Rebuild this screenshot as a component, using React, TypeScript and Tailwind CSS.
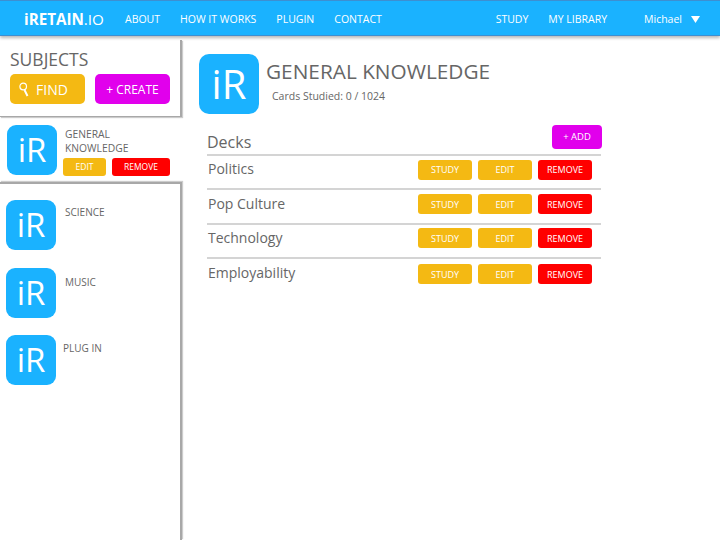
import React from 'react';

const font = "font-['Open_Sans',sans-serif]";

function Logo({ size = 'sm' }: { size?: 'sm' | 'lg' }) {
  return (
    <div
      className={
        size === 'lg'
          ? 'flex h-[60px] w-[60px] shrink-0 items-center justify-center rounded-[10px] bg-[#1ab2ff] text-[40px] text-white'
          : 'flex h-[50px] w-[50px] shrink-0 items-center justify-center rounded-[9px] bg-[#1ab2ff] text-[33px] text-white'
      }
    >
      iR
    </div>
  );
}

function Btn({ label, color }: { label: string; color: 'yellow' | 'red' }) {
  return (
    <div
      className={`flex h-5 w-[54px] items-center justify-center rounded-[3px] pt-px text-[9px] text-white ${
        color === 'red' ? 'bg-[#ff0000]' : 'bg-[#f4b913]'
      }`}
    >
      {label}
    </div>
  );
}

const decks = ['Politics', 'Pop Culture', 'Technology', 'Employability'];

export default function App() {
  return (
    <div className={`flex h-[540px] w-[720px] flex-col overflow-hidden bg-white ${font} text-[#666666]`}>
      {/* top nav */}
      <div className="z-10 flex h-[36px] shrink-0 items-center border-y border-[#3d8fd1] bg-[#1ab2ff] pl-6 pt-[3px] text-[10.5px] text-white shadow-[0_2px_3px_rgba(0,0,0,0.28)]">
        <div className="w-[101px] text-[15.2px]">
          <span className="font-bold">iRETAIN</span>.IO
        </div>
        <div className="flex gap-[20px]">
          <span>ABOUT</span>
          <span>HOW IT WORKS</span>
          <span>PLUGIN</span>
          <span>CONTACT</span>
        </div>
        <div className="ml-auto flex items-center">
          <span>STUDY</span>
          <span className="ml-[20px]">MY LIBRARY</span>
          <span className="ml-[37px]">Michael</span>
          <svg className="ml-[9px] mr-[20px]" width="9" height="7" viewBox="0 0 9 7">
            <path d="M0 0h9L4.5 7z" fill="#fff" />
          </svg>
        </div>
      </div>

      <div className="flex min-h-0 flex-1">
        {/* sidebar */}
        <div className="flex w-[182px] shrink-0 flex-col">
          <div className="mt-[4px] h-[77px] shrink-0 border-r-[2px] border-b border-[#a8a8a8] pl-[10px] pt-[9px] shadow-[1px_1px_1px_rgba(0,0,0,0.2)]">
            <div className="text-[17.5px] leading-[20px]">SUBJECTS</div>
            <div className="mt-[5px] flex gap-[10px]">
              <div className="flex h-[30px] w-[75px] items-center rounded-[5px] bg-[#f4b913] pl-[9px] pt-px text-[14px] text-white">
                <svg width="10" height="16" viewBox="0 0 10 16" fill="none" stroke="#fff" strokeWidth="1.2">
                  <circle cx="4.2" cy="4.5" r="3.3" />
                  <path d="M5.5 8l3 6" strokeWidth="2" />
                </svg>
                <span className="ml-[7px]">FIND</span>
              </div>
              <div className="flex h-[30px] w-[75px] items-center justify-center rounded-[5px] bg-[#e100ec] pt-[2px] text-[12px] text-white">
                + CREATE
              </div>
            </div>
          </div>

          {/* selected subject */}
          <div className="flex h-[65px] shrink-0 pl-[7px] pt-[8px]">
            <Logo />
            <div className="ml-[6px] pt-[2px]">
              <div className="ml-[2px] text-[10.3px] leading-[14px]">
                GENERAL
                <br />
                KNOWLEDGE
              </div>
              <div className="mt-[3px] flex gap-[6px]">
                <div className="flex h-[18px] w-[43px] items-center justify-center rounded-[3px] bg-[#f4b913] text-[8.5px] text-white">EDIT</div>
                <div className="flex h-[18px] w-[58px] items-center justify-center rounded-[3px] bg-[#ff0000] text-[8.5px] text-white">REMOVE</div>
              </div>
            </div>
          </div>

          <div className="flex flex-1 flex-col gap-[17.5px] border-t-[2px] border-r-[2px] border-[#a8a8a8] pl-[6px] pt-[16px] shadow-[1px_-1px_1px_rgba(0,0,0,0.2)]">
            <div className="flex">
              <Logo />
              <div className="ml-[9px] mt-[5px] text-[10px] leading-[14px]">SCIENCE</div>
            </div>
            <div className="flex">
              <Logo />
              <div className="ml-[9px] mt-[7px] text-[10px] leading-[14px]">MUSIC</div>
            </div>
            <div className="flex">
              <Logo />
              <div className="ml-[7px] mt-[6px] text-[10px] leading-[14px]">PLUG IN</div>
            </div>
          </div>
        </div>

        {/* main */}
        <div className="flex-1 pl-[17px] pt-[18px]">
          <div className="flex">
            <Logo size="lg" />
            <div className="ml-[7px] pt-[3px]">
              <div className="text-[20.8px] leading-[28px]">GENERAL KNOWLEDGE</div>
              <div className="ml-[6px] mt-[4px] text-[10.5px] leading-[14px]">Cards Studied: 0 / 1024</div>
            </div>
          </div>

          <div className="ml-[8px] mt-[11px] w-[394px]">
            <div className="flex h-[31px] items-end justify-between border-b-[2px] border-[#d4d4d4]">
              <span className="mb-px text-[16px] leading-[22px]">Decks</span>
              <div className="mb-[5px] mr-[-1px] flex h-[24px] w-[50px] items-center justify-center rounded-[4px] bg-[#e100ec] text-[9.5px] text-white">
                + ADD
              </div>
            </div>
            {decks.map((deck) => (
              <div key={deck} className="flex h-[34.4px] items-center justify-between border-b-[2px] border-[#d4d4d4] pl-px pr-[9px] last:border-b-0">
                <span className="mb-[6px] text-[14px] leading-[20px]">{deck}</span>
                <div className="mb-[5px] flex gap-[6px]">
                  <Btn label="STUDY" color="yellow" />
                  <Btn label="EDIT" color="yellow" />
                  <Btn label="REMOVE" color="red" />
                </div>
              </div>
            ))}
          </div>
        </div>
      </div>
    </div>
  );
}
